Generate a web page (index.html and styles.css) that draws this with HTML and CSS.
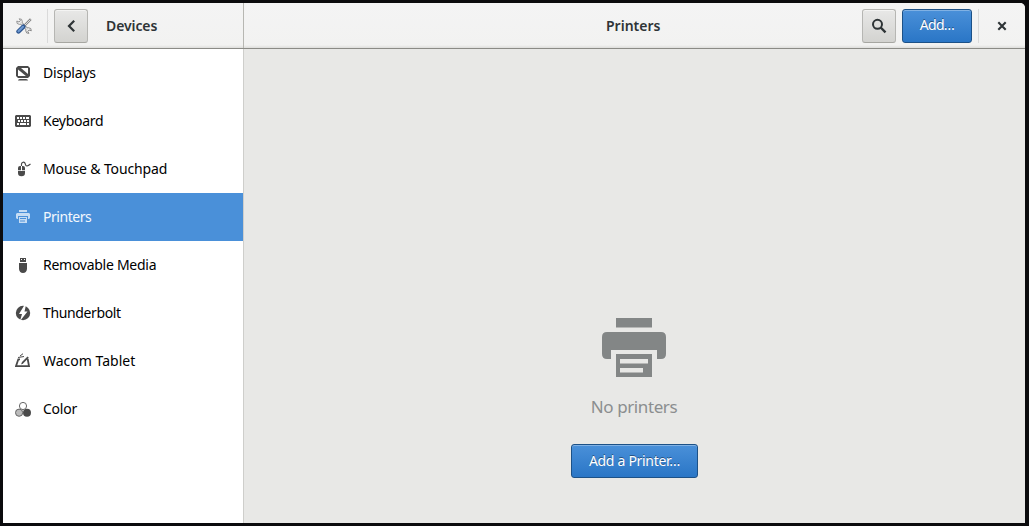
FILE: index.html
```html
<!DOCTYPE html>
<html lang="en">
<head>
<meta charset="utf-8">
<title>Printers</title>
<link rel="stylesheet" href="styles.css">
</head>
<body>
<div class="window">
  <header class="headerbar">
    <div class="header-left">
      <svg class="app-icon" width="16" height="16" viewBox="0 0 16 16">
        <path d="M3.5 3.5 12.5 12.5" stroke="#888" stroke-width="2.8"/>
        <path d="M.8 3A2.8 2.8 0 1 0 3.200 .8L4.400 2.500 3 4z" fill="#eee" stroke="#8c8c8c" stroke-width=".9"/>
        <path d="M15.300 12.800A2.800 2.800 0 1 0 13 15.300L11.800 13.500 13 12z" fill="#eee" stroke="#808080" stroke-width=".9"/>
        <path d="M4 4 12 12" stroke="#e4e4e2" stroke-width="1.4"/>
        <path d="M8 8 14.800 1.200" stroke="#858585" stroke-width="2.4"/>
        <path d="M8 8 14.400 1.600" stroke="#ddd" stroke-width="1"/>
        <path d="M2.500 13.500 7.300 8.700" stroke="#2c5590" stroke-width="4.400" stroke-linecap="round"/>
        <path d="M2.500 13.300 7 8.800" stroke="#6c98d0" stroke-width="2.200" stroke-linecap="round"/>
      </svg>
      <span class="divider divider-left"></span>
      <button class="button back" aria-label="Back">
        <svg width="16" height="16" viewBox="0 0 16 16"><path d="M11.200 2.700 6 8l5.200 5.300" fill="none" stroke="#2e3436" stroke-width="2.200"/></svg>
      </button>
      <span class="title title-left">Devices</span>
    </div>
    <div class="header-right">
      <span class="title title-main">Printers</span>
      <button class="button search" aria-label="Search">
        <svg width="16" height="16" viewBox="0 0 16 16"><circle cx="6.500" cy="6.300" r="4.500" fill="none" stroke="#2e3436" stroke-width="2"/><path d="m9.700 9.500 4.800 4.800" stroke="#2e3436" stroke-width="2.400"/></svg>
      </button>
      <button class="button suggested add"><span class="caption">Add…</span></button>
      <span class="divider divider-right"></span>
      <svg class="close" width="16" height="16" viewBox="0 0 16 16"><path d="m4.300 4.300 7.400 7.400m0-7.400-7.400 7.400" stroke="#2e3436" stroke-width="2.100"/></svg>
    </div>
  </header>
  <div class="body">
    <nav class="sidebar">
      <a class="row"><svg class="icon" viewBox="0 0 16 16"><path fill-rule="evenodd" d="M3 1h10l2 2v8l-2 2H3l-2-2V3zM3 3v8h10V3zM3 15.500q0-1.500 2-1.500h6q2 0 2 1.500z"/><path d="M3 3h3l7 6v2.500h-1.500L3 4.500z"/></svg><span class="label displays">Displays</span></a>
      <a class="row"><svg class="icon" viewBox="0 0 16 16"><path d="M1 2h14l1 1v10l-1 1H1l-1-1V3z"/><path d="M2 4h2v2H2zm3 0h2v2H5zm3 0h2v2H8zm3 0h3v2h-3zM3 7h2v2H3zm3 0h2v2H6zm3 0h2v2H9zm3 0h2v2h-2zM2 10h2v2H2zm3 0h6v2H5zm7 0h2v2h-2z" fill="#fff"/></svg><span class="label keyboard">Keyboard</span></a>
      <a class="row"><svg class="icon" viewBox="0 0 16 16"><path d="M3 9.300V7q0-2 2-2h1v4.300zM7 9.300V5h1q2 0 2 2v2.300zM3 10h7v2q0 3.300-3.500 3.300T3 12z"/><path d="M6.500 5Q6 1.500 8 1.200T10.500 3.700 15.500 3" fill="none" stroke="#4a4a4a" stroke-width="1.100"/></svg><span class="label mouse">Mouse &amp; Touchpad</span></a>
      <a class="row selected"><svg class="icon" viewBox="0 0 16 16"><path fill-rule="evenodd" d="M4 1h8v2H4zM2 4h12l1 1v4l-1 1h-1V7H3v3H2L1 9V5zM4 8h8v6H4zM5 9v1h6V9zM5 11.500v1h5v-1z"/></svg><span class="label printers">Printers</span></a>
      <a class="row"><svg class="icon" viewBox="0 0 16 16"><path fill-rule="evenodd" d="M5 1h6v4H5zM6 2v1h1V2zM9 2v1h1V2zM4 6h8v6q-.5 4-4 4t-4-4z"/></svg><span class="label removable">Removable Media</span></a>
      <a class="row"><svg class="icon" viewBox="0 0 16 16"><circle cx="8" cy="8" r="7.200"/><path d="M9.500 0 4 9h3l-2 7 7.500-9.500h-3L11 0z" fill="#fff"/></svg><span class="label thunderbolt">Thunderbolt</span></a>
      <a class="row"><svg class="icon" viewBox="0 0 16 16"><path d="M5 6.300H3.300L1 13.200h13L12.700 6" fill="none" stroke="#4a4a4a" stroke-width="1.800"/><path d="M6 11.500 7 9l5.500-5.500 1.300 1.300L8.300 10.300z"/><path d="M3 4.500 9 3.500M5 3l3-2.300" stroke="#4a4a4a"/></svg><span class="label wacom">Wacom Tablet</span></a>
      <a class="row"><svg class="icon" viewBox="0 0 16 16"><circle cx="4.100" cy="11.700" r="3.600" fill="#bbb" stroke="#666"/><circle cx="12" cy="11.700" r="4"/><circle cx="8" cy="5" r="3.600" fill="#fff" stroke="#666"/></svg><span class="label color">Color</span></a>
    </nav>
    <main class="content">
      <svg class="printer" width="64" height="59" viewBox="0 0 64 59"><path fill="#838686" fill-rule="evenodd" d="M14 0h36v9.500H14zM5 14h54q5 0 5 5v17q0 5-5 5h-4v-9H9v9H5q-5 0-5-5V19q0-5 5-5zM14 36h36v23H14zM18 41v4.500h28V41zM18 50v4.500h23V50z"/></svg>
      <div class="empty">No printers</div>
      <button class="button suggested add-printer"><span class="caption">Add a Printer…</span></button>
    </main>
  </div>
</div>
</body>
</html>
```
FILE: styles.css
```css
* { box-sizing: border-box; }
body { margin: 0; width: 1029px; height: 526px; padding: 3px 4px 3px 3px; background: #0b0b0d; overflow: hidden; font-family: "Noto Sans", sans-serif; font-size: 14px; }
.window { width: 1022px; height: 520px; display: flex; flex-direction: column; border-top-right-radius: 5px; overflow: hidden; background: #e8e8e6; }
.headerbar { height: 46px; flex: none; display: flex; background: linear-gradient(#f4f4f4, #f2f2f1 42px, #dededb 45px); border-bottom: 1px solid #8b8b86; }
.header-left { width: 241px; display: flex; align-items: center; border-right: 1px solid #b7b7b2; padding-left: 13px; }
.header-right { flex: 1; display: flex; align-items: center; position: relative; }
.divider { width: 1px; height: 34px; background: #dadada; }
.divider-left { margin: 0 6px 0 15px; }
.divider-right { margin: 0 15px 0 6px; }
.title { font-weight: 600; color: #2e3436; white-space: nowrap; padding-bottom: 1px; }
.title-left { margin-left: 18px; letter-spacing: -.1px; }
.title-main { position: absolute; left: 362px; letter-spacing: 0; }
.button { height: 34px; padding: 0; border: 1px solid #b6b6b3; border-bottom-color: #a6a6a1; border-radius: 3px; background: linear-gradient(#e8e8e7, #d3d3d0); box-shadow: inset 0 1px #f4f4f3; display: flex; align-items: center; justify-content: center; font: 14px "Noto Sans", sans-serif; white-space: nowrap; }
.back, .search { width: 34px; }
.search { margin-left: auto; margin-right: 6px; }
.suggested { color: #fff; border-color: #1c5187; background: linear-gradient(#4a90d9, #2a76c6); box-shadow: inset 0 1px #80b1e4; text-shadow: 0 -1px rgba(0,0,0,.4); }
.caption { padding-bottom: 2px; }
.add { width: 70px; letter-spacing: -.7px; }
.close { margin-right: 15px; }
.body { flex: 1; display: flex; min-height: 0; }
.sidebar { width: 241px; background: #fff; border-right: 1px solid #cececb; }
.row { height: 48px; display: flex; align-items: center; gap: 12px; padding-left: 12px; color: #000; }
.icon { width: 16px; height: 16px; flex: none; fill: #4a4a4a; }
.label { white-space: nowrap; padding-bottom: 2px; }
.displays { letter-spacing: -.2px; }
.keyboard { letter-spacing: -.25px; }
.mouse { letter-spacing: -.13px; }
.printers { letter-spacing: -.45px; }
.removable { letter-spacing: -.27px; }
.thunderbolt { letter-spacing: -.36px; }
.color { letter-spacing: -.25px; }
.selected { color: #f3f8fd; background: #4a90d9; }
.selected .icon { fill: #c5dcf4; }
.content { flex: 1; display: flex; flex-direction: column; align-items: center; padding-top: 269px; }
.printer { margin-right: 2px; }
.empty { margin-top: 18px; height: 24px; line-height: 24px; font-size: 17px; color: #8b8e8f; letter-spacing: -.4px; margin-right: 1px; }
.add-printer { width: 127px; margin-top: 25px; letter-spacing: -.3px; }
```
